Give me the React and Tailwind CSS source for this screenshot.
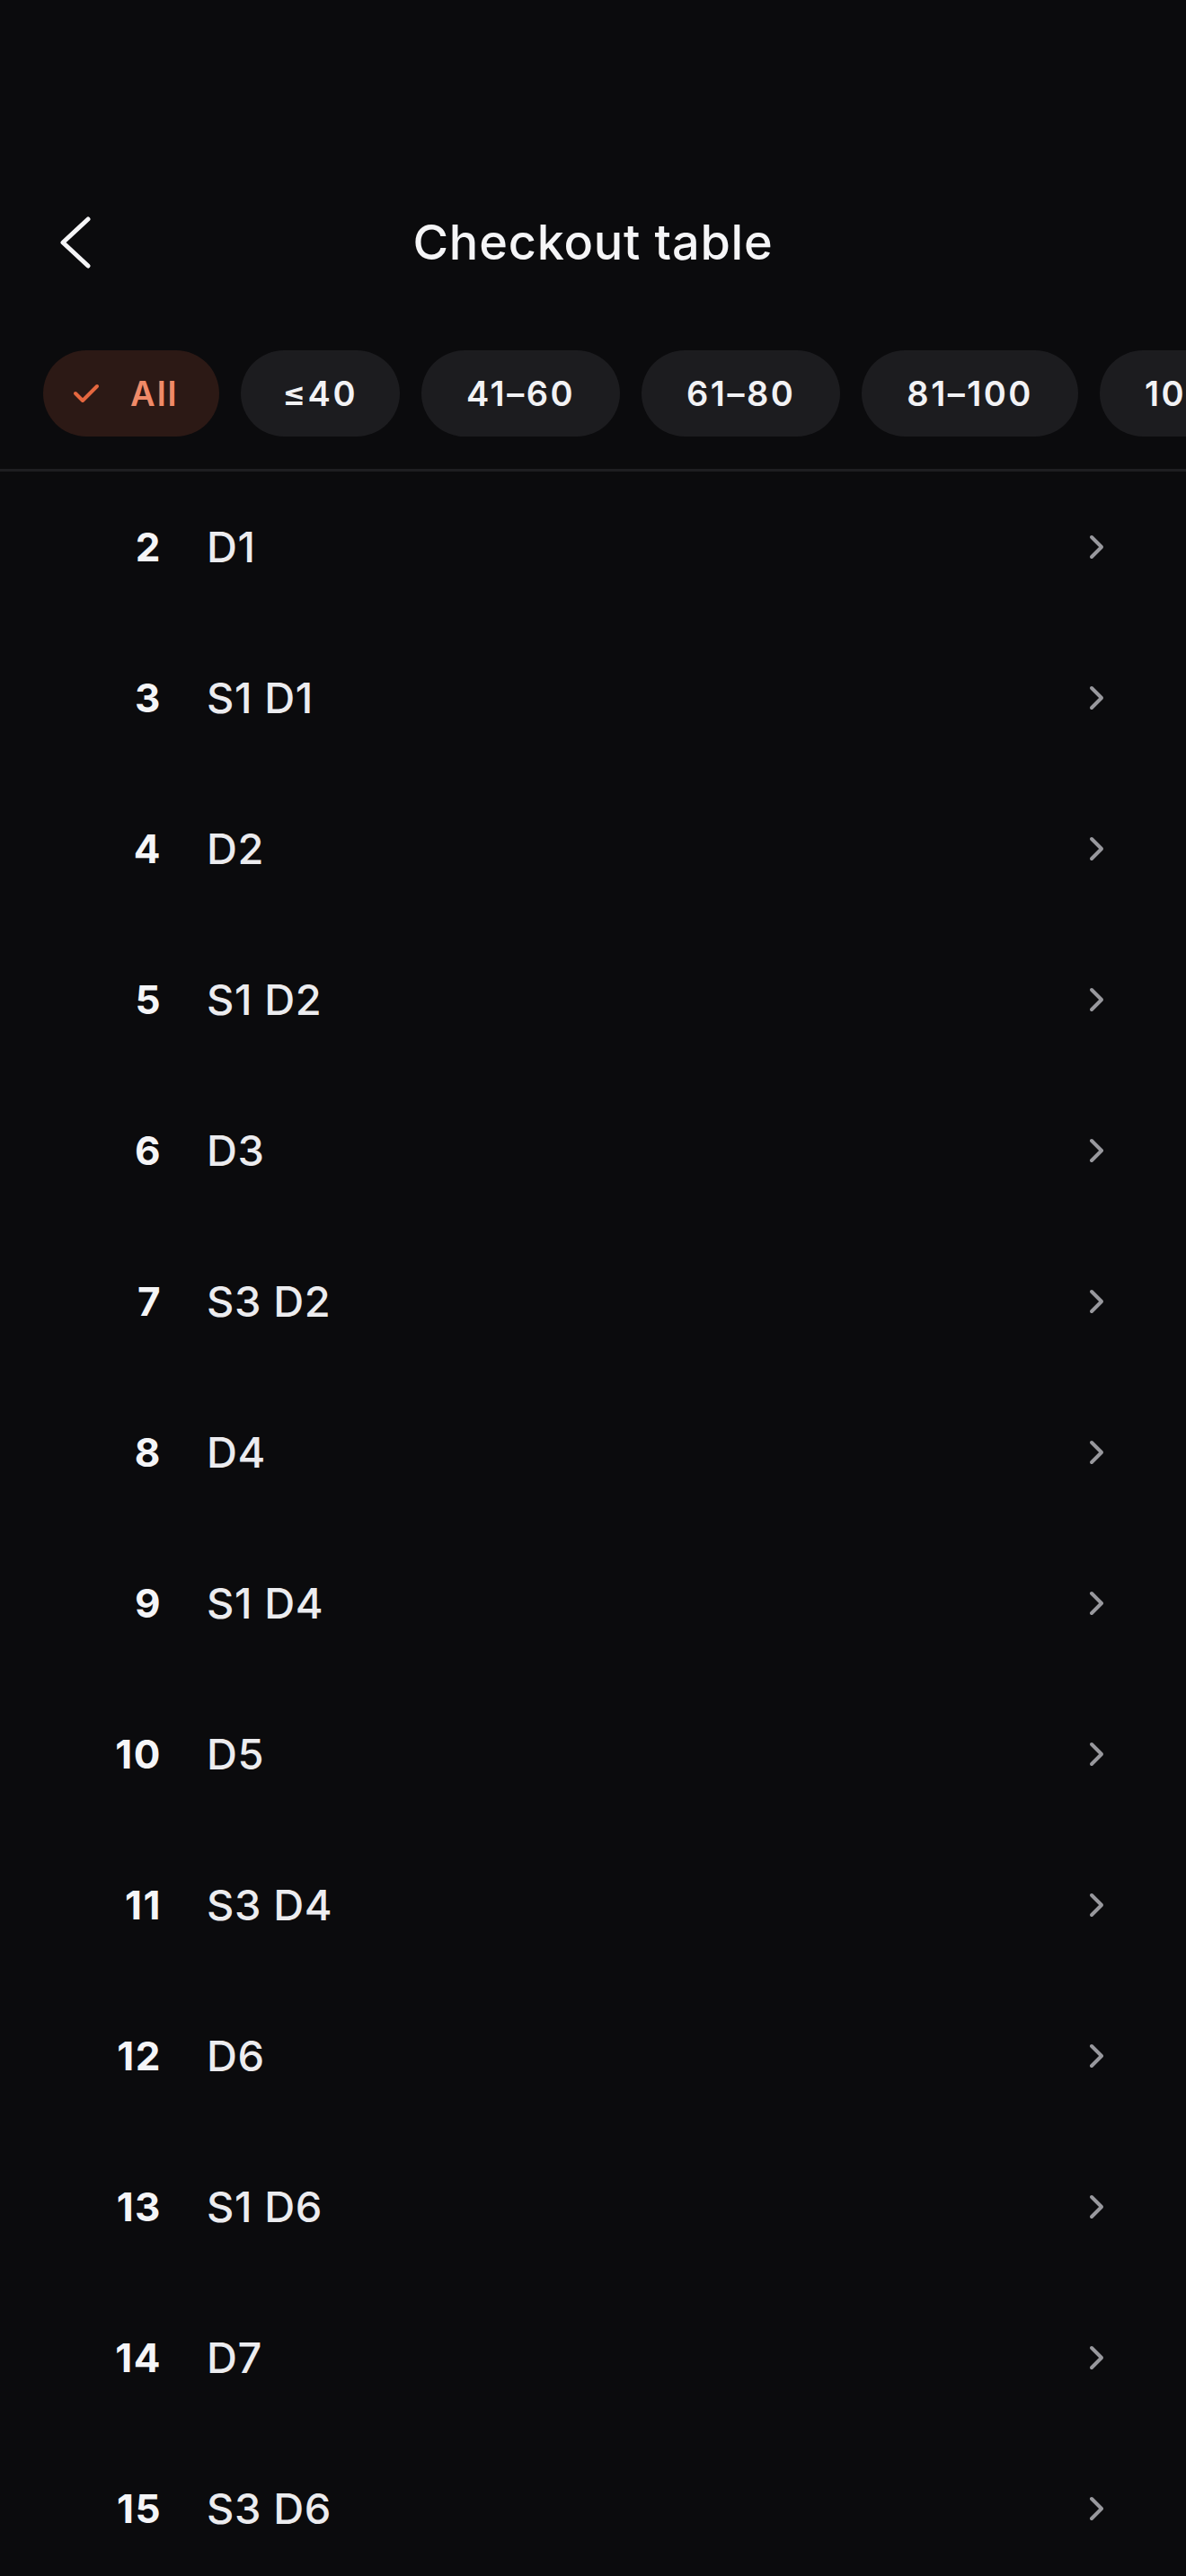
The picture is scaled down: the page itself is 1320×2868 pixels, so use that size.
import React from "react";

const chips = ["All", "≤40", "41–60", "61–80", "81–100", "101–120", "121–140"];

const rows = [
  [2, "D1"],
  [3, "S1 D1"],
  [4, "D2"],
  [5, "S1 D2"],
  [6, "D3"],
  [7, "S3 D2"],
  [8, "D4"],
  [9, "S1 D4"],
  [10, "D5"],
  [11, "S3 D4"],
  [12, "D6"],
  [13, "S1 D6"],
  [14, "D7"],
  [15, "S3 D6"],
];

function BackIcon() {
  return (
    <svg width="40" height="64" viewBox="0 0 40 64" fill="none">
      <path d="M34 6 L6 32 L34 58" stroke="#f5f5f7" strokeWidth="5" strokeLinecap="round" strokeLinejoin="round" />
    </svg>
  );
}

function CheckIcon() {
  return (
    <svg width="30" height="22" viewBox="0 0 30 22" fill="none">
      <path d="M3 11 L11 19 L27 3" stroke="#e5673f" strokeWidth="4" strokeLinecap="round" strokeLinejoin="round" />
    </svg>
  );
}

function ChevronRight() {
  return (
    <svg width="20" height="30" viewBox="0 0 20 30" fill="none">
      <path d="M4 4 L15 15 L4 26" stroke="#98989d" strokeWidth="4" strokeLinecap="round" strokeLinejoin="round" />
    </svg>
  );
}

export default function App() {
  return (
    <div
      className="w-[1320px] h-[2868px] overflow-hidden bg-[#0b0b0d] text-[#f5f5f7]"
      style={{ fontFamily: "Inter, 'Noto Sans', sans-serif" }}
    >
      {/* Nav bar */}
      <div className="pt-[206px]">
        <div className="grid grid-cols-[1fr_auto_1fr] items-center h-[128px]">
          <div className="pl-[64px] flex items-center">
            <BackIcon />
          </div>
          <h1 className="text-[54px] font-medium tracking-[0.8px] leading-none">Checkout table</h1>
          <div />
        </div>
      </div>

      {/* Filter chips */}
      <div className="mt-[56px] flex gap-[24px] pl-[48px] overflow-hidden whitespace-nowrap">
        {chips.map((c, i) =>
          i === 0 ? (
            <div
              key={c}
              className="shrink-0 h-[96px] rounded-full bg-[#2c1915] flex items-center pl-[33px] pr-[45px] gap-[34px]"
            >
              <CheckIcon />
              <span className="text-[38px] font-semibold tracking-[2px] text-[#ef8a68]">{c}</span>
            </div>
          ) : (
            <div
              key={c}
              className={
                "shrink-0 h-[96px] rounded-full bg-[#1c1c1f] flex items-center " +
                (c === "≤40" ? "pl-[47px] pr-[47px]" : "pl-[50px] pr-[50px]")
              }
            >
              <span className="text-[38px] font-semibold tracking-[2.5px] text-[#f2f2f4]">{c}</span>
            </div>
          )
        )}
      </div>

      <div className="mt-[36px] h-[3px] bg-[#1e1e21]" />

      {/* Rows */}
      <div>
        {rows.map(([n, label]) => (
          <div key={n} className="h-[168px] flex items-center">
            <div className="w-[180px] text-right text-[44px] font-bold tracking-[1.5px] text-[#f5f5f7]">{n}</div>
            <div className="ml-[50px] flex-1 text-[47px] font-medium tracking-[0.6px] text-[#ececef]">{label}</div>
            <div className="mr-[89px] flex items-center">
              <ChevronRight />
            </div>
          </div>
        ))}
      </div>
    </div>
  );
}
